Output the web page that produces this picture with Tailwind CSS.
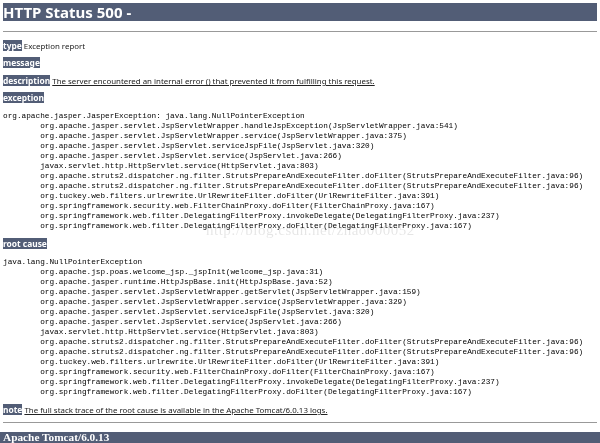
<!DOCTYPE html>
<html lang="en">

<head>
  <meta charset="UTF-8">
  <title>Apache Tomcat/6.0.13 - Error report</title>
  <script src="https://cdn.jsdelivr.net/npm/@tailwindcss/browser@4"></script>
</head>

<body class="relative bg-white text-[#222] font-['Noto_Sans','Liberation_Sans',sans-serif] text-[7.9px] h-[443px] overflow-hidden blur-[0.3px]">
  <h1 class="mx-[3px] mt-[3px] h-[18px] bg-[#525d76] text-white text-[15px] leading-[18px] font-bold">HTTP Status 500 -</h1>
  <hr class="mx-[3px] mt-[10px] border-t border-[#999]">

  <p class="mx-[3px] mt-[9px] h-[10px] leading-[10px] whitespace-nowrap"><b class="bg-[#525d76] text-white text-[8.4px]">type</b> Exception report</p>
  <p class="mx-[3px] mt-[7px] h-[10px] leading-[10px]"><b class="bg-[#525d76] text-white text-[8.4px]">message</b></p>
  <p class="mx-[3px] mt-[8px] h-[10px] leading-[10px] whitespace-nowrap"><b class="bg-[#525d76] text-white text-[8.4px]">description</b> <u>The server encountered an internal error () that prevented it from fulfilling this request.</u></p>
  <p class="mx-[3px] mt-[7px] h-[10px] leading-[10px]"><b class="bg-[#525d76] text-white text-[8.4px]">exception</b></p>

  <pre class="mx-[3px] mt-[8px] font-['Liberation_Mono',monospace] text-[7.74px] leading-[10px] [tab-size:8] text-black">org.apache.jasper.JasperException: java.lang.NullPointerException
	org.apache.jasper.servlet.JspServletWrapper.handleJspException(JspServletWrapper.java:541)
	org.apache.jasper.servlet.JspServletWrapper.service(JspServletWrapper.java:375)
	org.apache.jasper.servlet.JspServlet.serviceJspFile(JspServlet.java:320)
	org.apache.jasper.servlet.JspServlet.service(JspServlet.java:266)
	javax.servlet.http.HttpServlet.service(HttpServlet.java:803)
	org.apache.struts2.dispatcher.ng.filter.StrutsPrepareAndExecuteFilter.doFilter(StrutsPrepareAndExecuteFilter.java:96)
	org.apache.struts2.dispatcher.ng.filter.StrutsPrepareAndExecuteFilter.doFilter(StrutsPrepareAndExecuteFilter.java:96)
	org.tuckey.web.filters.urlrewrite.UrlRewriteFilter.doFilter(UrlRewriteFilter.java:391)
	org.springframework.security.web.FilterChainProxy.doFilter(FilterChainProxy.java:167)
	org.springframework.web.filter.DelegatingFilterProxy.invokeDelegate(DelegatingFilterProxy.java:237)
	org.springframework.web.filter.DelegatingFilterProxy.doFilter(DelegatingFilterProxy.java:167)
</pre>

  <p class="mx-[3px] mt-[8px] h-[10px] leading-[10px]"><b class="bg-[#525d76] text-white text-[8.4px]">root cause</b></p>

  <pre class="mx-[3px] mt-[8px] font-['Liberation_Mono',monospace] text-[7.74px] leading-[10px] [tab-size:8] text-black">java.lang.NullPointerException
	org.apache.jsp.poas.welcome_jsp._jspInit(welcome_jsp.java:31)
	org.apache.jasper.runtime.HttpJspBase.init(HttpJspBase.java:52)
	org.apache.jasper.servlet.JspServletWrapper.getServlet(JspServletWrapper.java:159)
	org.apache.jasper.servlet.JspServletWrapper.service(JspServletWrapper.java:329)
	org.apache.jasper.servlet.JspServlet.serviceJspFile(JspServlet.java:320)
	org.apache.jasper.servlet.JspServlet.service(JspServlet.java:266)
	javax.servlet.http.HttpServlet.service(HttpServlet.java:803)
	org.apache.struts2.dispatcher.ng.filter.StrutsPrepareAndExecuteFilter.doFilter(StrutsPrepareAndExecuteFilter.java:96)
	org.apache.struts2.dispatcher.ng.filter.StrutsPrepareAndExecuteFilter.doFilter(StrutsPrepareAndExecuteFilter.java:96)
	org.tuckey.web.filters.urlrewrite.UrlRewriteFilter.doFilter(UrlRewriteFilter.java:391)
	org.springframework.security.web.FilterChainProxy.doFilter(FilterChainProxy.java:167)
	org.springframework.web.filter.DelegatingFilterProxy.invokeDelegate(DelegatingFilterProxy.java:237)
	org.springframework.web.filter.DelegatingFilterProxy.doFilter(DelegatingFilterProxy.java:167)
</pre>

  <p class="mx-[3px] mt-[8px] h-[10px] leading-[10px] whitespace-nowrap"><b class="bg-[#525d76] text-white text-[8.4px]">note</b> <u>The full stack trace of the root cause is available in the Apache Tomcat/6.0.13 logs.</u></p>
  <hr class="mx-[3px] mt-[7px] border-t border-[#999]">
  <h3 class="mt-[9px] h-[11px] bg-[#525d76] text-white font-['Liberation_Serif',serif] text-[11.3px] leading-[11px] pl-[3px] font-bold whitespace-nowrap">Apache Tomcat/6.0.13</h3>

  <!-- faint watermark over the trace -->
  <span class="absolute left-[206px] top-[222px] font-['Liberation_Serif',serif] text-[15px] leading-[16px] tracking-[0.5px] text-black/10 whitespace-nowrap">http://blog.csdn.net/zhao000052</span>
</body>

</html>
